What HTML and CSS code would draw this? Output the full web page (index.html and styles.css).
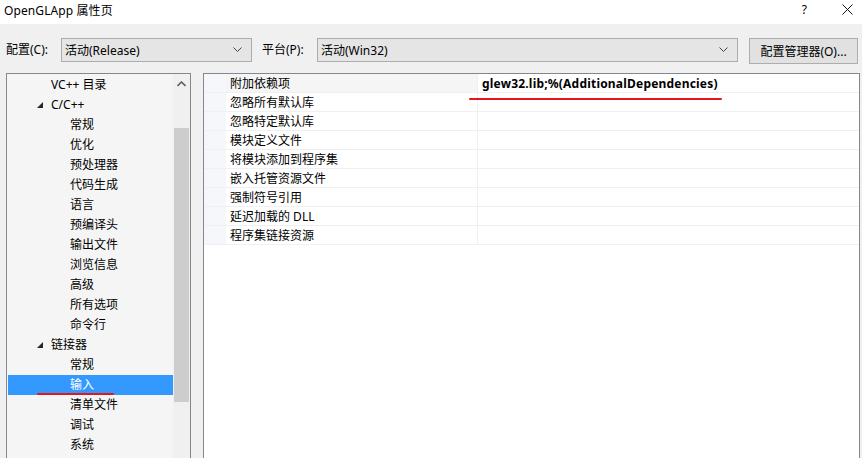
FILE: index.html
```html
<!DOCTYPE html>
<html>
<head>
<meta charset="utf-8">
<link rel="stylesheet" href="styles.css">
</head>
<body>
<div class="titlebar">
  <span class="title">OpenGLApp 属性页</span>
  <span class="tb-btns">
    <span class="help">?</span>
    <svg class="close" width="11" height="11" viewBox="0 0 11 11"><path d="M0.5 0.5L10.5 10.5M10.5 0.5L0.5 10.5" stroke="#111" stroke-width="1"/></svg>
  </span>
</div>
<div class="toolbar">
  <span class="lbl">配置(C):</span>
  <div class="select sel-config"><span>活动(Release)</span><svg width="9" height="6" viewBox="0 0 9 6"><path d="M0.5 0.5L4.5 4.5L8.5 0.5" fill="none" stroke="#444"/></svg></div>
  <span class="lbl lbl2">平台(P):</span>
  <div class="select sel-plat"><span>活动(Win32)</span><svg width="9" height="6" viewBox="0 0 9 6"><path d="M0.5 0.5L4.5 4.5L8.5 0.5" fill="none" stroke="#444"/></svg></div>
  <div class="button">配置管理器(O)...</div>
</div>
<div class="main">
  <div class="tree">
    <div class="tree-items">
      <div class="row l1">VC++ 目录</div>
      <div class="row l1"><span class="tri"></span>C/C++</div>
      <div class="row l2">常规</div>
      <div class="row l2">优化</div>
      <div class="row l2">预处理器</div>
      <div class="row l2">代码生成</div>
      <div class="row l2">语言</div>
      <div class="row l2">预编译头</div>
      <div class="row l2">输出文件</div>
      <div class="row l2">浏览信息</div>
      <div class="row l2">高级</div>
      <div class="row l2">所有选项</div>
      <div class="row l2">命令行</div>
      <div class="row l1"><span class="tri"></span>链接器</div>
      <div class="row l2">常规</div>
      <div class="row l2 selected">输入</div>
      <div class="row l2">清单文件</div>
      <div class="row l2">调试</div>
      <div class="row l2">系统</div>
    </div>
    <div class="scrollbar">
      <div class="sb-up"><svg width="9" height="6" viewBox="0 0 9 6"><path d="M0.5 5L4.5 1L8.5 5" fill="none" stroke="#606060" stroke-width="1.6"/></svg></div>
      <div class="sb-thumb"></div>
    </div>
    <div class="mark mark-left"></div>
  </div>
  <div class="grid">
    <div class="prow first"><div class="gut"></div><div class="name">附加依赖项</div><div class="val">glew32.lib;%(AdditionalDependencies)</div></div>
    <div class="prow"><div class="gut"></div><div class="name">忽略所有默认库</div><div class="val"></div></div>
    <div class="prow"><div class="gut"></div><div class="name">忽略特定默认库</div><div class="val"></div></div>
    <div class="prow"><div class="gut"></div><div class="name">模块定义文件</div><div class="val"></div></div>
    <div class="prow"><div class="gut"></div><div class="name">将模块添加到程序集</div><div class="val"></div></div>
    <div class="prow"><div class="gut"></div><div class="name">嵌入托管资源文件</div><div class="val"></div></div>
    <div class="prow"><div class="gut"></div><div class="name">强制符号引用</div><div class="val"></div></div>
    <div class="prow"><div class="gut"></div><div class="name">延迟加载的 DLL</div><div class="val"></div></div>
    <div class="prow"><div class="gut"></div><div class="name">程序集链接资源</div><div class="val"></div></div>
    <div class="mark mark-right"></div>
  </div>
</div>
</body>
</html>
```
FILE: styles.css
```css
* { box-sizing: border-box; }
html, body {
  margin: 0;
  padding: 0;
  width: 862px;
  height: 458px;
  overflow: hidden;
  background: #f0f0f0;
  font-family: "Noto Sans", "Noto Sans CJK SC", sans-serif;
  font-size: 12px;
  color: #000;
}
.titlebar {
  height: 24px;
  background: #fff;
  display: flex;
  align-items: center;
  justify-content: space-between;
  padding: 0 0 0 4px;
}
.title { font-size: 12px; line-height: 16px; margin-top: -3px; letter-spacing: 0.1px; }
.tb-btns { display: flex; align-items: center; margin-top: -6px; }
.help { font-size: 12px; margin-right: 35px; }
.close { margin-right: 9px; }
.toolbar {
  height: 49px;
  display: flex;
  align-items: flex-start;
  padding: 14px 0 0 6px;
}
.lbl { line-height: 24px; width: 55px; }
.lbl2 { margin-left: 10px; }
.select {
  height: 24px;
  border: 1px solid #acacac;
  background: #e5e5e5;
  display: flex;
  align-items: center;
  justify-content: space-between;
  padding: 0 9px 0 3px;
}
.sel-config { width: 191px; }
.sel-plat { width: 421px; }
.button {
  margin-left: 11px;
  width: 109px;
  height: 26px;
  border: 1px solid #adadad;
  background: #e1e1e1;
  display: flex;
  align-items: center;
  justify-content: center;
}
.main {
  display: flex;
  padding-left: 6px;
  height: 385px;
}
.tree {
  position: relative;
  width: 185px;
  height: 400px;
  border: 1px solid #828790;
  border-bottom: none;
  background: #f5f5f5;
  display: flex;
  padding: 0 0 0 1px;
}
.tree-items { width: 166px; padding-top: 1px; }
.row { height: 20px; line-height: 20px; white-space: nowrap; display: flex; align-items: center; }
.l1 { padding-left: 43px; position: relative; }
.l2 { padding-left: 62px; }
.tri {
  position: absolute;
  left: 29px;
  top: 7px;
  width: 0; height: 0;
  border-left: 6px solid transparent;
  border-bottom: 6px solid #262626;
}
.selected { background: #3399ff; color: #fff; }
.scrollbar {
  width: 17px;
  background: #f0f0f0;
  display: flex;
  flex-direction: column;
  align-items: center;
}
.sb-up { height: 17px; width: 17px; display: flex; align-items: center; justify-content: center; margin-top: 1px; }
.sb-thumb { width: 15px; height: 274px; background: #cdcdcd; margin-top: 36px; }
.mark { position: absolute; height: 2px; background: #e8141c; border-radius: 1px; }
.mark-left { left: 30px; top: 319px; width: 77px; }
.grid {
  position: relative;
  margin-left: 12px;
  width: 657px;
  height: 400px;
  border: 1px solid #828790;
  border-bottom: none;
  background: #fff;
}
.prow {
  display: flex;
  height: 19px;
  border-bottom: 1px solid #f0f0f0;
}
.gut { width: 22px; background: #f5f7fb; }
.name { width: 252px; padding: 2px 0 0 4px; line-height: 16px; border-right: 1px solid #f0f0f0; }
.val { flex: 1; padding: 2px 0 0 4px; line-height: 16px; font-weight: bold; letter-spacing: 0.2px; }
.first .name { background: #f5f5f5; }
.mark-right { left: 265px; top: 24px; width: 253px; }
```
